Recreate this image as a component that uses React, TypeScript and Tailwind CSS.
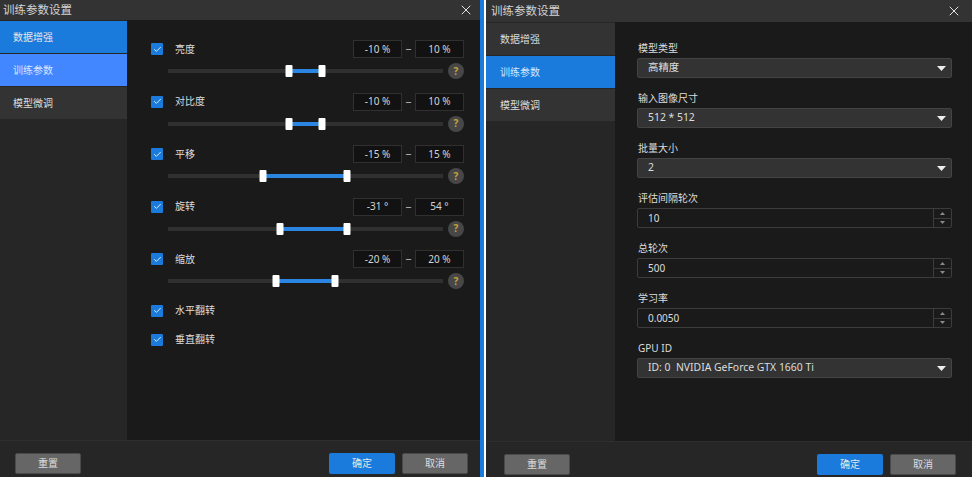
import * as React from "react";
import { Check, X } from "lucide-react";

const TABS = ["数据增强", "训练参数", "模型微调"];

const SLIDERS = [
  { label: "亮度", min: "-10 %", max: "10 %", from: 289, to: 322 },
  { label: "对比度", min: "-10 %", max: "10 %", from: 289, to: 322 },
  { label: "平移", min: "-15 %", max: "15 %", from: 263, to: 347 },
  { label: "旋转", min: "-31 °", max: "54 °", from: 280, to: 347 },
  { label: "缩放", min: "-20 %", max: "20 %", from: 276, to: 335 },
];

const FIELDS = [
  { label: "模型类型", value: "高精度", kind: "select" },
  { label: "输入图像尺寸", value: "512 * 512", kind: "select" },
  { label: "批量大小", value: "2", kind: "select" },
  { label: "评估间隔轮次", value: "10", kind: "spin" },
  { label: "总轮次", value: "500", kind: "spin" },
  { label: "学习率", value: "0.0050", kind: "spin" },
  { label: "GPU ID", value: "ID: 0  NVIDIA GeForce GTX 1660 Ti", kind: "select" },
];

const TRACK_LEFT = 168;

function Header() {
  return (
    <div className="flex h-5 shrink-0 items-center justify-between bg-[#333333] pl-[3px] pr-[6px] text-[11.5px] text-[#d4d4d4]">
      <span>训练参数设置</span>
      <X size={16} strokeWidth={1.5} className="text-[#e4e4e4]" />
    </div>
  );
}

function Footer() {
  return (
    <div className="flex h-[37px] shrink-0 items-start justify-between border-t border-[#2e2e2e] bg-[#262626] pl-[15px] pr-3 pt-3">
      <FooterButton label="重置" />
      <div className="flex gap-[7px]">
        <FooterButton label="确定" primary />
        <FooterButton label="取消" />
      </div>
    </div>
  );
}

function FooterButton({ label, primary }: { label: string; primary?: boolean }) {
  return (
    <button
      className={
        primary
          ? "flex h-[21px] w-[66px] items-center justify-center rounded-[2px] bg-[#1a7bdc] text-[10px] text-[#e8e8e8]"
          : "flex h-[21px] w-[66px] items-center justify-center rounded-[2px] border border-[#4a4a4a] bg-[#666666] text-[10px] text-[#dddddd]"
      }
    >
      {label}
    </button>
  );
}

function CheckBox() {
  return (
    <span className="flex h-3 w-3 shrink-0 items-center justify-center rounded-[1px] bg-[#1a7bdc]">
      <Check size={9} strokeWidth={2.2} className="text-white" />
    </span>
  );
}

function RangeInput({ value }: { value: string }) {
  return (
    <div className="flex h-[18px] w-[49px] items-center justify-center border border-[#303030] bg-[#121212] text-[10px] text-[#d4d4d4]">
      {value}
    </div>
  );
}

function SliderRow({ item }: { item: (typeof SLIDERS)[number] }) {
  return (
    <div>
      <div className="flex h-[18px] items-center">
        <CheckBox />
        <span className="ml-3 flex-1 text-[10px] text-[#dddddd]">{item.label}</span>
        <RangeInput value={item.min} />
        <span className="w-[13px] text-center text-[12px] text-[#a8a8a8]">–</span>
        <RangeInput value={item.max} />
      </div>
      <div className="mt-[5px] flex h-4 items-center pl-[17px]">
        <div className="relative h-1 w-[275px] bg-[#303030]">
          <div
            className="absolute top-0 h-1 bg-[#2a86e2]"
            style={{ left: item.from - TRACK_LEFT, width: item.to - item.from }}
          />
          <span
            className="absolute top-[-4px] h-3 w-[7px] -translate-x-1/2 rounded-[1px] bg-white"
            style={{ left: item.from - TRACK_LEFT }}
          />
          <span
            className="absolute top-[-4px] h-3 w-[7px] -translate-x-1/2 rounded-[1px] bg-white"
            style={{ left: item.to - TRACK_LEFT }}
          />
        </div>
        <span className="ml-[5px] flex h-4 w-4 items-center justify-center rounded-full bg-[#474747] text-[10px] font-bold text-[#c9a23c]">
          ?
        </span>
      </div>
    </div>
  );
}

function Caret() {
  return (
    <svg width="9" height="5" viewBox="0 0 9 5" className="text-[#eeeeee]">
      <path d="M0 0h9L4.5 5z" fill="currentColor" />
    </svg>
  );
}

function Field({ field }: { field: (typeof FIELDS)[number] }) {
  return (
    <div className="h-[50px]">
      <div className="flex h-5 items-center pl-px text-[10px] text-[#dddddd]">{field.label}</div>
      {field.kind === "select" ? (
        <div className="flex h-5 w-[315px] items-center justify-between rounded-[2px] border border-[#444444] bg-[#333333] pl-[10px] pr-[5px] text-[10px] text-[#dddddd]">
          <span className="whitespace-pre text-[10.4px]">{field.value}</span>
          <Caret />
        </div>
      ) : (
        <div className="flex h-5 w-[315px] items-center justify-between rounded-[2px] border border-[#3c3c3c] bg-[#1a1a1a] pl-[10px] text-[10px] text-[#dddddd]">
          <span>{field.value}</span>
          <div className="flex h-full w-[18px] flex-col border-l border-[#3c3c3c]">
            <div className="flex flex-1 items-center justify-center border-b border-[#3c3c3c]">
              <svg width="5" height="3" viewBox="0 0 5 3">
                <path d="M0 3h5L2.5 0z" fill="#8a8a8a" />
              </svg>
            </div>
            <div className="flex flex-1 items-center justify-center">
              <svg width="5" height="3" viewBox="0 0 5 3">
                <path d="M0 0h5L2.5 3z" fill="#8a8a8a" />
              </svg>
            </div>
          </div>
        </div>
      )}
    </div>
  );
}

function LeftPanel() {
  return (
    <div className="flex w-[480px] shrink-0 flex-col bg-[#1a1a1a]">
      <Header />
      <div className="flex min-h-0 flex-1">
        <div className="flex w-[127px] shrink-0 flex-col gap-px bg-[#262626] pt-px">
          <div className="flex h-8 items-center bg-[#1a7bdc] pl-[13px] text-[10px] text-[#e6e6e6]">{TABS[0]}</div>
          <div className="flex h-8 items-center bg-[#4287ff] pl-[13px] text-[10px] text-[#d8e6ff]">{TABS[1]}</div>
          <div className="flex h-8 items-center bg-[#333333] pl-[13px] text-[10px] text-[#dddddd]">{TABS[2]}</div>
        </div>
        <div className="flex-1 pl-6 pr-4 pt-5">
          <div className="flex flex-col gap-[13.5px]">
            {SLIDERS.map((s) => (
              <SliderRow key={s.label} item={s} />
            ))}
          </div>
          <div className="mt-[7px]">
            {["水平翻转", "垂直翻转"].map((l) => (
              <div key={l} className="flex h-[29px] items-center">
                <CheckBox />
                <span className="ml-3 text-[10px] text-[#dddddd]">{l}</span>
              </div>
            ))}
          </div>
        </div>
      </div>
      <Footer />
    </div>
  );
}

function RightPanel() {
  return (
    <div className="flex w-[486px] shrink-0 flex-col bg-[#1a1a1a]">
      <div className="flex h-[22px] shrink-0 items-center justify-between bg-[#333333] pl-[5px] pr-[10px] text-[11.5px] text-[#d4d4d4]">
        <span>训练参数设置</span>
        <X size={16} strokeWidth={1.5} className="text-[#e4e4e4]" />
      </div>
      <div className="flex min-h-0 flex-1">
        <div className="flex w-[129px] shrink-0 flex-col gap-px bg-[#262626] pt-px">
          <div className="flex h-8 items-center bg-[#333333] pl-[14px] text-[10px] text-[#dddddd]">{TABS[0]}</div>
          <div className="flex h-8 items-center bg-[#1a7bdc] pl-[14px] text-[10px] text-[#d8e6ff]">{TABS[1]}</div>
          <div className="flex h-8 items-center bg-[#333333] pl-[14px] text-[10px] text-[#dddddd]">{TABS[2]}</div>
        </div>
        <div className="flex-1 pl-[22px] pt-4">
          {FIELDS.map((f) => (
            <Field key={f.label} field={f} />
          ))}
        </div>
      </div>
      <div className="flex h-[36px] shrink-0 items-start justify-between border-t border-[#2e2e2e] bg-[#262626] pl-[18px] pr-4 pt-3">
        <FooterButton label="重置" />
        <div className="flex gap-[7px]">
          <FooterButton label="确定" primary />
          <FooterButton label="取消" />
        </div>
      </div>
    </div>
  );
}

export default function App() {
  return (
    <div className="flex h-[477px] w-[972px] overflow-hidden font-['Noto_Sans','Noto_Sans_CJK_SC',sans-serif]">
      <LeftPanel />
      <div className="w-1 shrink-0 bg-[#1a7bdc]" />
      <div className="w-0.5 shrink-0 bg-white" />
      <RightPanel />
    </div>
  );
}
